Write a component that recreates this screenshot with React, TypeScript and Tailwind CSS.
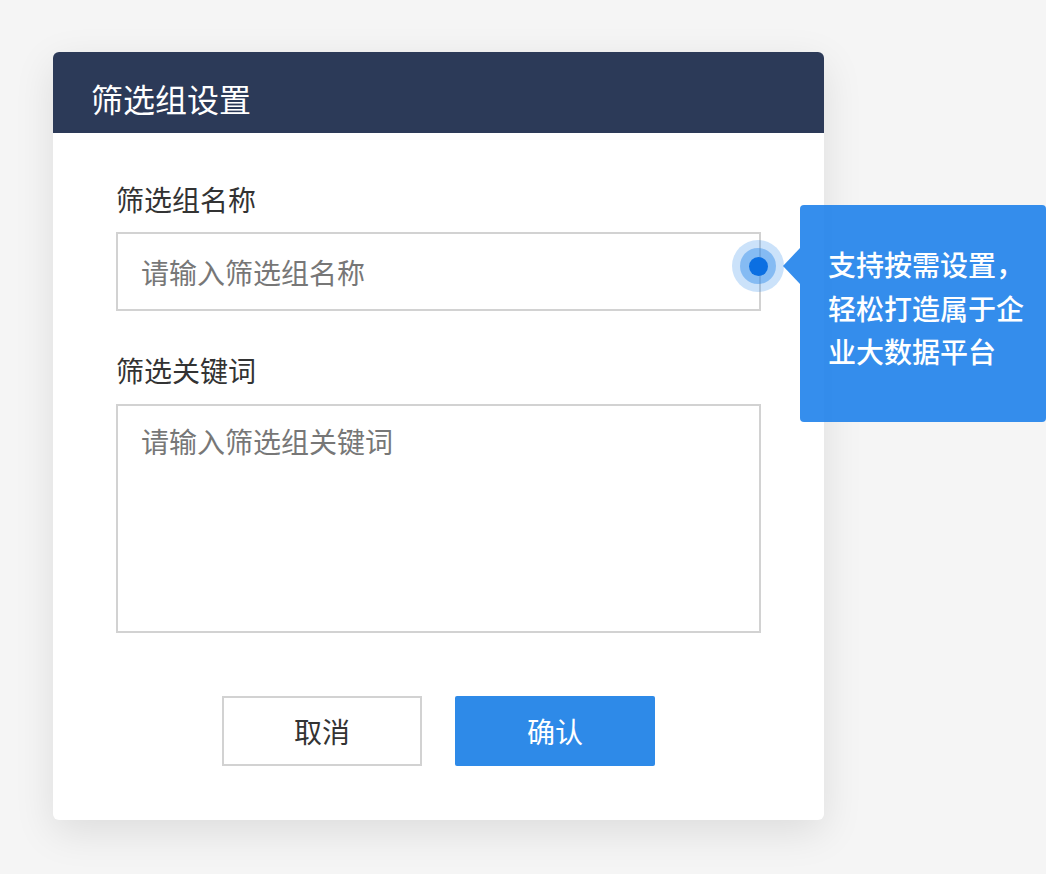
import React from "react";

const font = { fontFamily: '"Noto Sans CJK SC", "Noto Sans", sans-serif' };

export default function App() {
  return (
    <div className="min-h-[874px] w-full bg-[#f5f5f5] pt-[52px] pl-[53px]" style={font}>
      <div className="relative w-[771px] h-[768px] rounded-[6px] bg-white shadow-[0_12px_40px_rgba(0,0,0,0.10)]">
        <div className="h-[81px] rounded-t-[6px] bg-[#2c3a58] flex items-center pl-[38px] pt-[10px]">
          <span className="text-[32px] leading-none text-white">筛选组设置</span>
        </div>
        <div className="px-[63px] pt-[48px]">
          <div className="h-[36px] leading-[36px] text-[28px] text-[#333]">筛选组名称</div>
          <div className="mt-[15px] h-[79px] border-2 border-[#d2d2d2] flex items-center pl-[23px]">
            <span className="text-[28px] leading-none text-[#777]">请输入筛选组名称</span>
          </div>
          <div className="mt-[41px] h-[36px] leading-[36px] text-[28px] text-[#333]">筛选关键词</div>
          <div className="mt-[16px] h-[229px] border-2 border-[#d2d2d2] pl-[23px] pt-[15px]">
            <span className="text-[28px] leading-[40px] text-[#777]">请输入筛选组关键词</span>
          </div>
          <div className="mt-[63px] flex justify-center gap-[33px]">
            <div className="w-[200px] h-[70px] border-2 border-[#d2d2d2] flex items-center justify-center text-[28px] text-[#333]">
              取消
            </div>
            <div className="w-[200px] h-[70px] rounded-[2px] bg-[#2e8ae8] flex items-center justify-center text-[28px] text-white">
              确认
            </div>
          </div>
        </div>

        {/* pulsing dot */}
        <div className="absolute left-[679px] top-[188px] w-[52px] h-[52px] rounded-full bg-[#318cec]/25 flex items-center justify-center">
          <div className="w-[36px] h-[36px] rounded-full bg-[#318cec]/45 flex items-center justify-center">
            <div className="w-[19px] h-[19px] rounded-full bg-[#0b6fe2]" />
          </div>
        </div>

        {/* tooltip */}
        <div className="absolute left-[747px] top-[153px] w-[246px] h-[217px] rounded-[4px] bg-[#1f82eb]/90 pl-[28px] pt-[38px]">
          <div className="absolute left-[-17px] top-[43px] w-0 h-0 border-y-[18px] border-y-transparent border-r-[17px] border-r-[#1f82eb]/90" />
          <div className="text-[28px] leading-[43.5px] font-medium text-white">
            支持按需设置，<br />
            轻松打造属于企<br />
            业大数据平台
          </div>
        </div>
      </div>
    </div>
  );
}
